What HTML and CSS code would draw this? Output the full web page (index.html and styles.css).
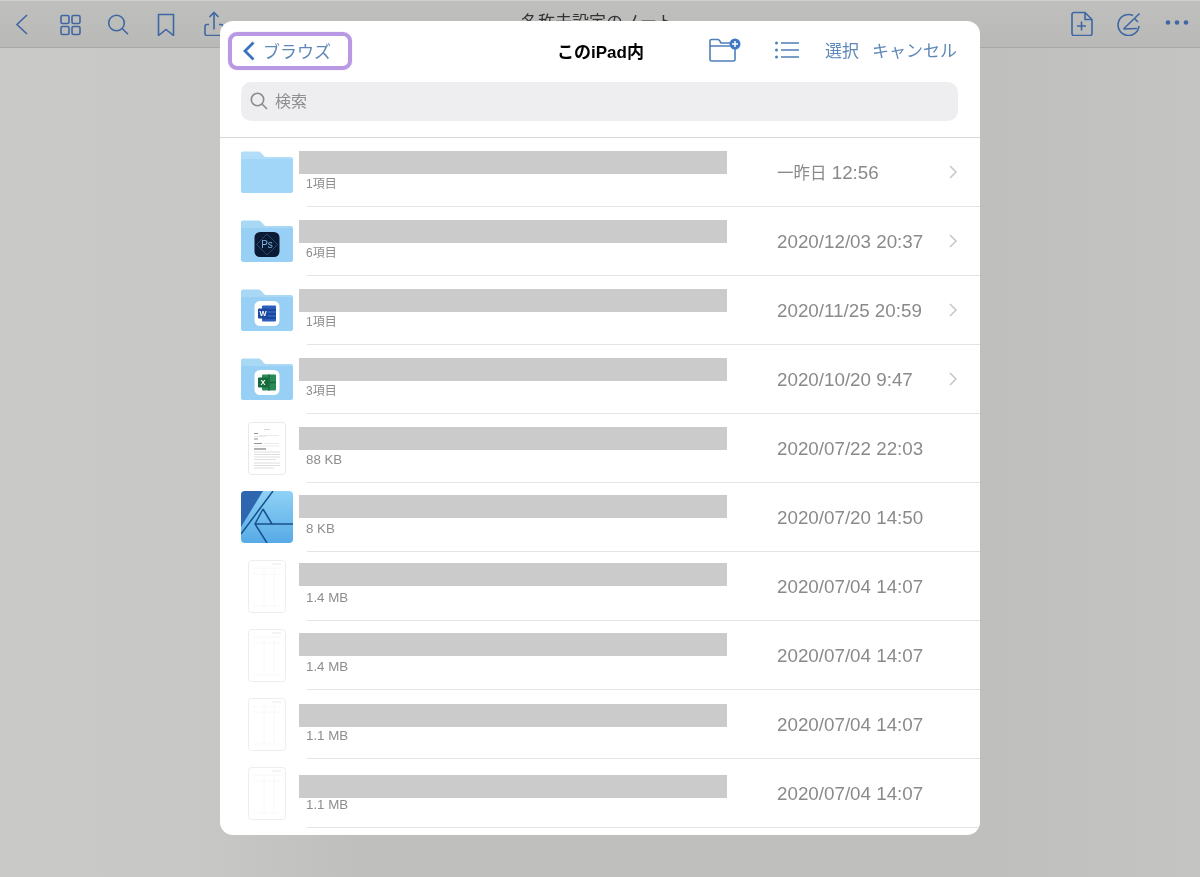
FILE: index.html
```html
<!DOCTYPE html>
<html lang="ja">
<head>
<meta charset="utf-8">
<title>このiPad内</title>
<link rel="stylesheet" href="styles.css">
</head>
<body>
<svg class="defs" width="0" height="0" aria-hidden="true">
  <defs>
    <linearGradient id="folder-back" x1="0" y1="0" x2="0" y2="1"><stop offset="0" stop-color="#b4def8"/><stop offset="1" stop-color="#a6d8f6"/></linearGradient>
    <symbol id="folder" viewBox="0 0 52 42">
      <path d="M2 .5h15c1.500 0 2.500.6 3.400 1.600L23 5c.7.8 1.400 1 2.400 1H50c1.200 0 2 .8 2 2v31.500c0 1.500-1 2.500-2.500 2.500H2.500C1 42 0 41 0 39.500V2.500c0-1.200.8-2 2-2z" fill="url(#folder-back)"/>
      <path d="M0 10c0-1.200.8-2 2-2h48c1.200 0 2 .8 2 2v29.500c0 1.500-1 2.500-2.500 2.500H2.500C1 42 0 41 0 39.500z" fill="#a2d6f8"/>
    </symbol>
    <symbol id="folder-app" viewBox="0 0 52 42">
      <path d="M2 .5h15c1.500 0 2.500.6 3.400 1.600L23 5c.7.8 1.400 1 2.400 1H50c1.200 0 2 .8 2 2v31.500c0 1.500-1 2.500-2.500 2.500H2.500C1 42 0 41 0 39.500V2.500c0-1.200.8-2 2-2z" fill="#a9d8f4"/>
      <path d="M0 10c0-1.200.8-2 2-2h48c1.200 0 2 .8 2 2v29.500c0 1.500-1 2.500-2.500 2.500H2.500C1 42 0 41 0 39.500z" fill="#97d0f4"/>
    </symbol>
    <symbol id="page-faint" viewBox="0 0 38 53">
      <rect x=".5" y=".5" width="37" height="52" rx="3" fill="#fff" stroke="#eceded"/>
      <path d="M5 8h28M5 14h28M5 46h28M16 8v38M26 8v38" stroke="#f7f8f9" fill="none"/>
      <path d="M24 4h9" stroke="#e6e9ed" fill="none"/>
    </symbol>
  </defs>
</svg>

<header class="toolbar">
  <div class="tool-group">
    <svg class="tool" viewBox="0 0 24 24"><path d="M17 3.500 7 13l10 9.500"/></svg>
    <svg class="tool" viewBox="0 0 24 24"><rect x="3" y="4" width="8" height="8" rx="1.500"/><rect x="14" y="4" width="8" height="8" rx="1.500"/><rect x="3" y="15" width="8" height="8" rx="1.500"/><rect x="14" y="15" width="8" height="8" rx="1.500"/></svg>
    <svg class="tool" viewBox="0 0 24 24"><circle cx="10.500" cy="11.500" r="7.800"/><path d="m16.300 17 5.700 5.700"/></svg>
    <svg class="tool" viewBox="0 0 24 24"><path d="M4.500 3h15v21l-7.500-6-7.500 6z"/></svg>
    <svg class="tool" viewBox="0 0 24 24"><path d="M7 13H5a2 2 0 0 0-2 2v7a2 2 0 0 0 2 2h14a2 2 0 0 0 2-2v-7a2 2 0 0 0-2-2h-2M12 18V1M7.500 5.500 12 1l4.500 4.500"/></svg>
  </div>
  <div class="doc-title">名称未設定のノート</div>
  <div class="tool-group">
    <svg class="tool" viewBox="0 0 24 24"><path d="M5 1h11l7 7v14a2 2 0 0 1-2 2H5a2 2 0 0 1-2-2V3a2 2 0 0 1 2-2zM16 1v7h7M12.500 10v9M8 14.500h9"/></svg>
    <svg class="tool" viewBox="0 0 24 24"><path d="M16 4A10.500 10.500 0 1 0 22 14.500M22.500 2 6.500 17.500M6.500 17.500 20 17M17.500 7l3.500 3.500"/></svg>
    <svg class="tool dots" viewBox="0 0 24 24"><circle cx="3" cy="11" r="2.300"/><circle cx="12" cy="11" r="2.300"/><circle cx="21" cy="11" r="2.300"/></svg>
  </div>
</header>

<main class="sheet">
  <div class="sheet-head">
    <div class="nav-row">
      <div class="back-box">
        <svg class="back-chev" viewBox="0 0 12 20"><path d="M10.500 1.500 2 10l8.500 8.500"/></svg>
        <span>ブラウズ</span>
      </div>
      <div class="sheet-title">このiPad内</div>
      <svg class="head-icon folder-plus" viewBox="0 0 32 24">
        <path class="ln" d="M1 6V3a1.500 1.500 0 0 1 1.500-1.500h6c1 0 1.500.4 2 1L12 5h9M1 6v15.500A1.500 1.500 0 0 0 2.500 23h22a1.500 1.500 0 0 0 1.500-1.500V11M1 8h20"/>
        <circle cx="26" cy="6" r="5.500" fill="#3f78c4"/>
        <path d="M26 3v6M23 6h6" stroke="#fff" stroke-width="1.500"/>
      </svg>
      <svg class="head-icon list-icon" viewBox="0 0 24 18">
        <path class="ln" d="M6 2h18M6 9h18M6 16h18"/>
        <circle cx="1.500" cy="2" r="1.500" fill="#4f7fb8"/><circle cx="1.500" cy="9" r="1.500" fill="#4f7fb8"/><circle cx="1.500" cy="16" r="1.500" fill="#4f7fb8"/>
      </svg>
      <span class="head-link select">選択</span>
      <span class="head-link cancel">キャンセル</span>
    </div>
    <div class="search">
      <svg class="search-icon" viewBox="0 0 18 18"><circle cx="7.500" cy="7.500" r="6.200"/><path d="m12 12 5 5"/></svg>
      <span class="search-text">検索</span>
    </div>
  </div>

  <ul class="list">
    <li class="row">
      <div class="thumb"><svg class="folder" viewBox="0 0 52 42"><use href="#folder"/></svg></div>
      <div class="main"><div class="bar"></div><div class="sub">1項目</div></div>
      <div class="date"><span class="date-ja">一昨日</span> 12:56</div>
      <svg class="chev" viewBox="0 0 10 16"><path d="m2 2 6 6-6 6"/></svg>
    </li>
    <li class="row">
      <div class="thumb">
        <svg class="folder" viewBox="0 0 52 42">
          <use href="#folder-app"/>
          <rect x="13.500" y="12" width="25" height="25" rx="5.500" fill="#0b1b34"/>
          <path d="M26 14 36.500 24.500 26 35 15.500 24.500z" fill="none" stroke="#3a6aa5" stroke-width=".6"/>
          <text x="26" y="28" class="ps">Ps</text>
        </svg>
      </div>
      <div class="main"><div class="bar"></div><div class="sub">6項目</div></div>
      <div class="date">2020/12/03 20:37</div>
      <svg class="chev" viewBox="0 0 10 16"><path d="m2 2 6 6-6 6"/></svg>
    </li>
    <li class="row">
      <div class="thumb">
        <svg class="folder" viewBox="0 0 52 42">
          <use href="#folder-app"/>
          <rect x="13.500" y="12" width="25" height="25" rx="5.500" fill="#fff"/>
          <rect x="21" y="16.500" width="14" height="16" rx="1" fill="#2b5fbd"/>
          <path d="M21 21h14M21 25h14M21 29h14" stroke="#1c3f91" stroke-width="1.500"/>
          <rect x="17" y="19.500" width="10" height="10" rx="1" fill="#1d4a9e"/>
          <text x="22" y="27.200" class="app-letter">W</text>
        </svg>
      </div>
      <div class="main"><div class="bar"></div><div class="sub">1項目</div></div>
      <div class="date">2020/11/25 20:59</div>
      <svg class="chev" viewBox="0 0 10 16"><path d="m2 2 6 6-6 6"/></svg>
    </li>
    <li class="row">
      <div class="thumb">
        <svg class="folder" viewBox="0 0 52 42">
          <use href="#folder-app"/>
          <rect x="13.500" y="12" width="25" height="25" rx="5.500" fill="#fff"/>
          <rect x="21" y="16.500" width="14" height="16" rx="1" fill="#2a8a57"/>
          <path d="M28 16.500v16M21 24.500h14" stroke="#17693f" stroke-width="1.500"/>
          <rect x="17" y="19.500" width="10" height="10" rx="1" fill="#17693a"/>
          <text x="22" y="27.200" class="app-letter">X</text>
        </svg>
      </div>
      <div class="main"><div class="bar"></div><div class="sub">3項目</div></div>
      <div class="date">2020/10/20 9:47</div>
      <svg class="chev" viewBox="0 0 10 16"><path d="m2 2 6 6-6 6"/></svg>
    </li>
    <li class="row">
      <div class="thumb">
        <svg class="page" viewBox="0 0 38 53">
          <rect x=".5" y=".5" width="37" height="52" rx="3" fill="#fff" stroke="#e8e9ea"/>
          <path d="M16 7.500h6" stroke="#ccc" stroke-width=".8"/>
          <path d="M6 11.500h4M6 17h4M6 21.500h8" stroke="#888" stroke-width=".9"/>
          <path d="M11 13.500h20M6 14.500h12M15 21.500h16M6 24h25" stroke="#e6e6e6" stroke-width=".8"/>
          <path d="M6 27h12" stroke="#666" stroke-width="1.100"/>
          <path d="M6 30h26M6 32.500h26M6 35h26M6 37.500h22M6 41h26M6 43.500h26M6 46h20" stroke="#d6d6d6" stroke-width=".8"/>
        </svg>
      </div>
      <div class="main"><div class="bar"></div><div class="sub sub-size">88 KB</div></div>
      <div class="date">2020/07/22 22:03</div>
    </li>
    <li class="row">
      <div class="thumb">
        <svg class="app" viewBox="0 0 52 52">
          <defs><linearGradient id="aff" x1="0" y1="0" x2="0" y2="1"><stop offset="0" stop-color="#8fd2f6"/><stop offset="1" stop-color="#56aae6"/></linearGradient></defs>
          <rect width="52" height="52" rx="4" fill="url(#aff)"/>
          <path d="M4 0h18L0 36V4a4 4 0 0 1 4-4z" fill="#2f66b0"/>
          <path d="M32 0 0 43M22 18 14 33 26 52M22 18 31 33M14 33h38" fill="none" stroke="#17508f" stroke-width="1.500"/>
        </svg>
      </div>
      <div class="main"><div class="bar bar-12"></div><div class="sub sub-size">8 KB</div></div>
      <div class="date">2020/07/20 14:50</div>
    </li>
    <li class="row">
      <div class="thumb"><svg class="page" viewBox="0 0 38 53"><use href="#page-faint"/></svg></div>
      <div class="main"><div class="bar bar-11"></div><div class="sub sub-size">1.4 MB</div></div>
      <div class="date">2020/07/04 14:07</div>
    </li>
    <li class="row">
      <div class="thumb"><svg class="page" viewBox="0 0 38 53"><use href="#page-faint"/></svg></div>
      <div class="main"><div class="bar bar-12"></div><div class="sub sub-size">1.4 MB</div></div>
      <div class="date">2020/07/04 14:07</div>
    </li>
    <li class="row">
      <div class="thumb"><svg class="page" viewBox="0 0 38 53"><use href="#page-faint"/></svg></div>
      <div class="main"><div class="bar bar-14"></div><div class="sub sub-size">1.1 MB</div></div>
      <div class="date">2020/07/04 14:07</div>
    </li>
    <li class="row">
      <div class="thumb"><svg class="page" viewBox="0 0 38 53"><use href="#page-faint"/></svg></div>
      <div class="main"><div class="bar bar-16"></div><div class="sub sub-size">1.1 MB</div></div>
      <div class="date">2020/07/04 14:07</div>
    </li>
  </ul>
</main>
</body>
</html>
```
FILE: styles.css
```css
* { box-sizing: border-box; }

html, body { height: 100%; }

body {
  margin: 0;
  overflow: hidden;
  position: relative;
  font-family: "Liberation Sans", "Noto Sans CJK JP", sans-serif;
  background: linear-gradient(90deg, #c9c9c7 0, #c8c8c6 16%, #bfc0bd 30%, #bfc0bd 82%, #c4c5c2 100%);
}

.defs { position: absolute; }

.toolbar {
  height: 48px;
  display: flex;
  align-items: flex-start;
  padding: 10px 11px 0 10px;
  background: linear-gradient(#bfc0bd, #b9bab7);
  border-top: 1px solid #cfd0cd;
  border-bottom: 1px solid #a9aaa7;
  filter: blur(.35px);
}

.tool-group { display: flex; gap: 24px; }

.tool {
  width: 24px;
  height: 25px;
  fill: none;
  stroke: #3f67a3;
  stroke-width: 1.600;
}

.dots { fill: #3f67a3; stroke: none; }

.doc-title {
  flex: 1;
  text-align: center;
  font-size: 17px;
  line-height: 24px;
  color: #333;
  padding-right: 100px;
}

.sheet {
  position: absolute;
  left: 220px;
  top: 21px;
  width: 760px;
  height: 814px;
  background: #fff;
  border-radius: 13px;
  overflow: hidden;
  filter: blur(.35px);
}

.sheet-head {
  height: 117px;
  border-bottom: 1px solid #d8d8da;
  padding: 11px 22px 0 8px;
}

.nav-row {
  height: 38px;
  display: flex;
  align-items: center;
}

.back-box {
  width: 124px;
  height: 38px;
  flex: none;
  display: flex;
  align-items: center;
  gap: 8px;
  padding-left: 11px;
  border: 4px solid #b998e4;
  border-radius: 9px;
  box-shadow: 0 0 1px #b998e4;
  font-size: 17px;
  color: #5f88b8;
}

.back-box span { margin-top: -2px; }

.back-chev {
  width: 12px;
  height: 20px;
  fill: none;
  stroke: #3a72c2;
  stroke-width: 2.800;
}

.sheet-title {
  margin-left: 205px;
  margin-top: -2px;
  white-space: nowrap;
  font-size: 17px;
  font-weight: 700;
  color: #000;
}

.head-icon { flex: none; }

.ln { fill: none; stroke: #4f7fb8; stroke-width: 1.600; }

.folder-plus { width: 32px; height: 24px; margin-left: auto; margin-top: -2px; }

.list-icon { width: 24px; height: 18px; margin-left: 34px; margin-top: -2px; }

.head-link {
  font-size: 17px;
  color: #5f88b8;
  white-space: nowrap;
  margin-top: -3px;
}

.select { margin-left: 26px; margin-right: 13px; }

.cancel { margin-right: 1px; }

.search {
  margin: 12px 0 0 13px;
  height: 39px;
  display: flex;
  align-items: center;
  gap: 7px;
  padding-left: 9px;
  background: #eeeef0;
  border-radius: 10px;
  font-size: 16px;
  color: #8e8e93;
}

.search-text { margin-top: -4px; }

.search-icon {
  width: 18px;
  height: 18px;
  margin-top: -1px;
  fill: none;
  stroke: #8a8a8f;
  stroke-width: 1.600;
}

.list { list-style: none; margin: 0; padding: 0; }

.row {
  height: 69px;
  display: flex;
  align-items: center;
  padding-left: 21px;
  padding-bottom: 1px;
  background: linear-gradient(#e4e4e6, #e4e4e6) no-repeat 87px 100% / 100% 1px;
}

.thumb {
  width: 52px;
  flex: none;
  display: flex;
  justify-content: center;
}

.folder { width: 52px; height: 42px; display: block; }
.page { width: 38px; height: 53px; display: block; }
.app { width: 52px; height: 52px; display: block; }

.main {
  width: 428px;
  margin-left: 6px;
  flex: none;
  align-self: flex-start;
}

.bar { height: 23px; background: #cbcbcb; margin: 13px 0 2px; }
.bar-11 { margin: 11px 0 4px; }
.bar-12 { margin: 12px 0 3px; }
.bar-14 { margin: 14px 0 1px; }
.bar-16 { margin: 16px 0 -1px; }

.sub {
  margin-left: 7px;
  font-size: 12px;
  line-height: 16px;
  color: #8d8d8d;
}

.sub-size { font-size: 13.300px; }

.date {
  margin-left: 50px;
  margin-top: 2px;
  width: 171px;
  flex: none;
  font-size: 18.800px;
  line-height: 22px;
  color: #8a8a8a;
  white-space: nowrap;
}

.date-ja { font-size: 16.500px; }

.chev {
  width: 10px;
  height: 16px;
  fill: none;
  stroke: #c6c6c8;
  stroke-width: 1.500;
}

.ps { font-size: 10px; fill: #7fb4ea; text-anchor: middle; font-weight: 400; }
.app-letter { font-size: 7.500px; fill: #fff; text-anchor: middle; font-weight: 700; }
```
